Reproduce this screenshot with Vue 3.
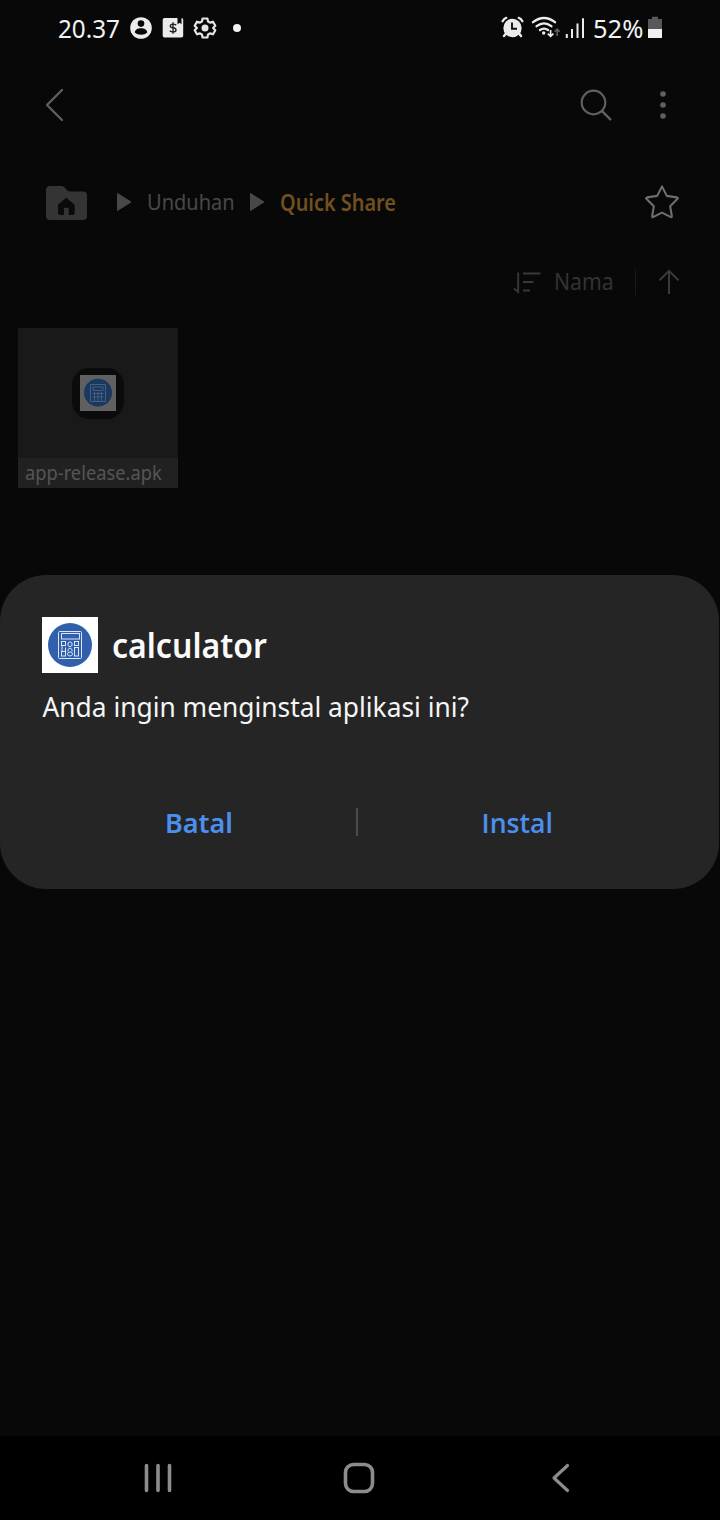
<script setup>
</script>

<template>
  <div class="screen">
    <header class="status">
      <span class="txt clock">20.37</span>
      <svg class="status-left" width="120" height="28" viewBox="126 14 120 28">
        <circle cx="141" cy="28" r="10.8" fill="#ececec" />
        <circle cx="141" cy="23.6" r="3.3" fill="#080808" />
        <path d="M134.8 32.6c0-5.8 12.4-5.8 12.4 0-3 3-9.400 3-12.400 0z" fill="#080808" />
        <path d="M164.500 18h13v6.200l2.200-1.500 1.800 1.500V18q1.700.1 1.700 1.700v16q0 1.800-1.800 1.800h-16.900q-1.800 0-1.800-1.800v-16q0-1.700 1.800-1.700z" fill="#ececec" />
        <path d="M176.200 25.100q-1.200-1-3.200-1-2.700 0-2.700 1.800 0 1.500 2.700 1.900 3 .4 3 2.100 0 1.900-3 1.900-2.100 0-3.300-1.100M173 22.300v11.400" fill="none" stroke="#222" stroke-width="1.400" />
        <path d="M202.600 18.500h4.800l.7 3 1.900 1.100 3-.9 2.300 4.100-2.200 2.200 2.200 2.200-2.300 4.100-3-.9-1.900 1.100-.7 3h-4.800l-.7-3-1.900-1.100-3 .9-2.300-4.100 2.200-2.200-2.200-2.200 2.300-4.100 3 .9 1.900-1.100z" fill="none" stroke="#e6e6e6" stroke-width="2.200" stroke-linejoin="round" />
        <circle cx="205" cy="28" r="3.500" fill="#e6e6e6" />
        <circle cx="237" cy="28" r="4" fill="#f2f2f2" />
      </svg>
      <svg class="status-right" width="90" height="28" viewBox="498 14 90 28">
        <circle cx="512.500" cy="28" r="9.200" fill="#ececec" />
        <path d="M502.600 21.300q1.200-2.500 3.700-3.500M522.400 21.300q-1.200-2.500-3.700-3.500" fill="none" stroke="#ececec" stroke-width="2.200" stroke-linecap="round" />
        <path d="M506 33.500l-2 2.500M519 33.500l2 2.500" stroke="#ececec" stroke-width="2.400" stroke-linecap="round" />
        <path d="M512 22.500v6.200h5" fill="none" stroke="#111" stroke-width="1.900" />
        <path d="M533 22.200q11-8.400 22 0M536.600 26.200q7.400-5.600 14.800 0M540 30q4-2.800 8 0" fill="none" stroke="#ececec" stroke-width="2.300" stroke-linecap="round" />
        <circle cx="543.700" cy="33" r="1.700" fill="#ececec" />
        <path d="M550.600 30v6.300M547.800 33.600l2.800 2.800 2.800-2.800" fill="none" stroke="#ececec" stroke-width="1.700" />
        <path d="M557.200 36v-6.500M554.700 31.700l2.500-2.500 2.500 2.500" fill="none" stroke="#606060" stroke-width="1.600" />
        <path d="M566.800 34v4M572 29v9M577.500 23.500v14.500M583 18.200v19.800" stroke="#ececec" stroke-width="2" />
      </svg>
      <span class="txt percent">52%</span>
      <svg class="battery" width="16" height="24" viewBox="647 16 16 24">
        <path d="M648 19h4v-2.200h6v2.200h4v10h-14z" fill="#585858" />
        <path d="M648 29h14v9h-14z" fill="#f0f0f0" />
      </svg>
    </header>

    <div class="appbar">
      <svg width="24" height="36" viewBox="43 87 24 36">
        <path d="M62 90L47 105l15 15" fill="none" stroke="#606060" stroke-width="2.300" stroke-linecap="round" stroke-linejoin="round" />
      </svg>
      <svg width="92" height="36" viewBox="578 87 92 36">
        <circle cx="593.500" cy="102.500" r="11.800" fill="none" stroke="#606060" stroke-width="2.200" />
        <path d="M602.300 111.300l8 8" stroke="#606060" stroke-width="2.400" stroke-linecap="round" />
        <circle cx="663" cy="94" r="2.800" fill="#606060" />
        <circle cx="663" cy="105" r="2.800" fill="#606060" />
        <circle cx="663" cy="116" r="2.800" fill="#606060" />
      </svg>
    </div>

    <nav class="crumbs">
      <svg width="90" height="40" viewBox="44 182 90 40">
        <path d="M46 190q0-4 4-4h11.500q2 0 3.200 1.500l2.300 2.700q1.200 1.300 3 1.300h13q4 0 4 4v20.500q0 4-4 4H50q-4 0-4-4z" fill="#343434" />
        <path d="M66.300 198.200l7.800 6.600v8.500q0 1.200-1.200 1.200h-3.700v-6.200q0-1-1-1h-3.800q-1 0-1 1v6.200h-3.700q-1.200 0-1.200-1.200v-8.500z" fill="#0a0a0a" stroke="#0a0a0a" stroke-linejoin="round" />
        <path d="M117.500 193.500l13.500 8.500-13.500 8.500z" fill="#484848" stroke="#484848" stroke-linejoin="round" />
      </svg>
      <span class="txt folder">Unduhan</span>
      <svg width="18" height="24" viewBox="249 190 18 24">
        <path d="M250.500 193.500l13.500 8.500-13.500 8.500z" fill="#484848" stroke="#484848" stroke-linejoin="round" />
      </svg>
      <span class="txt current">Quick Share</span>
      <svg class="star" width="38" height="38" viewBox="643 184 38 38">
        <path d="M662 187.400l4.800 9.500 10 1.500q1.800.4.500 1.700l-7.100 7.200 1.600 9.700q.2 1.700-1.400.9l-8.400-4.300-8.500 4.300q-1.500.8-1.300-.9l1.600-9.700-7.200-7.200q-1.200-1.300.5-1.700l10.100-1.500z" fill="none" stroke="#6e6e6e" stroke-width="2.100" stroke-linejoin="round" />
      </svg>
    </nav>

    <div class="sort">
      <svg width="32" height="30" viewBox="511 267 32 30">
        <path d="M518.200 272.500v19.500l-4.200-3.500M523 273.500h17.500M523 282h10.500M523 290.500h7" fill="none" stroke="#383838" stroke-width="1.900" />
      </svg>
      <span class="txt sort-name">Nama</span>
      <i class="sort-line"></i>
      <svg class="up" width="24" height="28" viewBox="657 268 24 28">
        <path d="M669 294v-23M659.500 280.300l9.500-9.500 9.500 9.500" fill="none" stroke="#3a3a3a" stroke-width="2" />
      </svg>
    </div>

    <div class="tile">
      <div class="thumb">
        <div class="squircle">
          <svg width="36" height="36" viewBox="0 0 36 36">
            <path d="M0 0h36v36H0z" fill="#606060" />
            <circle cx="18" cy="17.700" r="14" fill="#1b3860" />
            <path d="M10.500 9.500h15v17h-15zM13 12h10v3.500H13zM12.500 18.500h11M12.500 22h11M14.500 17v9M18 17v9M21.500 17v9" fill="none" stroke="#465f80" stroke-width="1" />
          </svg>
        </div>
      </div>
      <div class="caption"><span class="txt file">app-release.apk</span></div>
    </div>

    <section class="dialog">
      <div class="title-row">
        <svg width="56" height="56" viewBox="0 0 56 56">
          <path d="M0 0h56v56H0z" fill="#fff" />
          <circle cx="28" cy="28" r="22" fill="#305fab" />
          <g fill="none" stroke="#dbe5f6" stroke-width="1">
            <rect x="16.500" y="14.500" width="23" height="27" rx="1" />
            <rect x="19.500" y="16.500" width="18" height="5.500" />
            <rect x="19.500" y="24.500" width="4" height="4" />
            <path d="M26 28.500v-2.500q2-2.500 4 0v2.500" />
            <rect x="32.500" y="24.500" width="4" height="4" />
            <path d="M20 28.500v6M23.500 30.500v4M26 34.500v-2q2-3 4 0v2M26 28.500q2 2.500 4 0" />
            <rect x="19.500" y="34.500" width="4" height="4.500" />
            <ellipse cx="28" cy="37" rx="2.500" ry="2" />
            <rect x="32.500" y="30.500" width="4" height="8.500" />
          </g>
        </svg>
        <h1 class="txt title">calculator</h1>
      </div>
      <p class="txt question">Anda ingin menginstal aplikasi ini?</p>
      <div class="actions">
        <div class="action"><span class="txt cancel">Batal</span></div>
        <i class="action-line"></i>
        <div class="action"><span class="txt install">Instal</span></div>
      </div>
    </section>

    <footer class="navbar">
      <svg width="32" height="32" viewBox="142 1462 32 32">
        <path d="M146.500 1465.500v25M158 1465.500v25M169.500 1465.500v25" stroke="#8c8c8c" stroke-width="3.600" stroke-linecap="round" />
      </svg>
      <svg width="36" height="36" viewBox="341 1460 36 36">
        <rect x="345.500" y="1464.500" width="27" height="27" rx="8" fill="none" stroke="#8c8c8c" stroke-width="3.600" />
      </svg>
      <svg width="24" height="32" viewBox="549 1462 24 32">
        <path d="M567.500 1465.500L554 1478l13.500 12.500" fill="none" stroke="#8c8c8c" stroke-width="3.200" stroke-linecap="round" stroke-linejoin="round" />
      </svg>
    </footer>
  </div>
</template>

<style>
body {
  margin: 0;
  background: #080808;
}
</style>

<style scoped>
.screen {
  position: relative;
  display: flex;
  flex-direction: column;
  width: 720px;
  height: 1520px;
  overflow: hidden;
  background: #080808;
  font-family: "Noto Sans", "Open Sans", sans-serif;
}
svg {
  display: block;
  flex: none;
}
.txt {
  display: block;
  flex: none;
  margin: 0;
  white-space: nowrap;
  transform-origin: 0 50%;
}
.status {
  display: flex;
  align-items: center;
  height: 56px;
  padding-left: 58px;
}
.clock {
  width: 68px;
  color: #f2f2f2;
  font-size: 25px;
  line-height: 34px;
  transform: scaleX(0.97);
}
.status-right {
  margin-left: 252px;
}
.percent {
  width: 54px;
  margin-left: 5px;
  color: #f2f2f2;
  font-size: 25px;
  line-height: 34px;
  transform: scaleX(1.02);
}
.appbar {
  display: flex;
  align-items: center;
  justify-content: space-between;
  height: 98px;
  padding: 0 50px 0 43px;
}
.crumbs {
  display: flex;
  align-items: center;
  height: 96px;
  padding-left: 44px;
}
.folder {
  width: 103px;
  margin-left: 13px;
  color: #484848;
  font-size: 22.5px;
  line-height: 32px;
  transform: scaleX(0.89);
}
.folder + svg {
  margin-left: -1px;
}
.current {
  width: 150px;
  margin-left: 13px;
  color: #70501f;
  font-size: 23px;
  font-weight: 600;
  line-height: 32px;
  transform: scaleX(0.865);
}
.star {
  margin-left: auto;
  margin-right: 39px;
}
.sort {
  display: flex;
  align-items: center;
  height: 64px;
  padding-left: 511px;
}
.sort-name {
  width: 81px;
  margin-left: 11px;
  color: #333;
  font-size: 23px;
  line-height: 32px;
  transform: translateY(-1px) scaleX(0.92);
}
.sort-line {
  width: 1px;
  height: 26px;
  background: #191919;
}
.up {
  margin-left: 21px;
}
.tile {
  width: 160px;
  height: 160px;
  margin: 14px 0 0 18px;
  background: #191919;
}
.thumb {
  display: flex;
  align-items: center;
  justify-content: center;
  height: 130px;
}
.squircle {
  display: flex;
  align-items: center;
  justify-content: center;
  width: 52px;
  height: 51px;
  border-radius: 17px;
  background: #0b0b0b;
}
.caption {
  display: flex;
  align-items: center;
  height: 30px;
  padding-left: 7px;
  background: #212121;
}
.file {
  color: #555;
  font-size: 20px;
  line-height: 30px;
  transform: scaleX(0.915);
}
.dialog {
  position: absolute;
  top: 575px;
  left: 0;
  box-sizing: border-box;
  width: 719px;
  height: 314px;
  padding: 42px 42px 0;
  border-radius: 46px;
  background: #252525;
}
.title-row {
  display: flex;
  align-items: center;
  gap: 14px;
  height: 56px;
}
.title {
  color: #fafafa;
  font-size: 35px;
  font-weight: 600;
  line-height: 48px;
  transform: scaleX(0.915);
}
.question {
  margin-top: 15px;
  color: #f5f5f5;
  font-size: 27px;
  line-height: 38px;
  transform: translateX(0.5px) scaleX(0.975);
}
.actions {
  display: flex;
  align-items: center;
  height: 60px;
  margin-top: 66px;
}
.action {
  display: flex;
  justify-content: center;
  width: 314px;
}
.action-line {
  width: 2px;
  height: 28px;
  background: #4b4b4b;
}
.cancel,
.install {
  color: #4c8fef;
  font-size: 27px;
  font-weight: 600;
  transform-origin: 50% 50%;
}
.install {
  font-family: "Open Sans", sans-serif;
  transform: translateX(2px) scaleX(0.985);
}
.navbar {
  display: flex;
  align-items: center;
  height: 84px;
  margin-top: auto;
  padding-left: 142px;
  background: #000;
}
.navbar svg + svg {
  margin-left: 167px;
}
.navbar svg:last-child {
  margin-left: 172px;
}
</style>
